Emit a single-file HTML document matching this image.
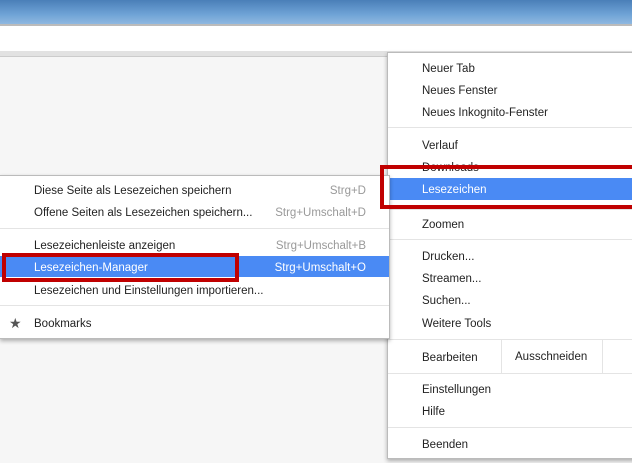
<!DOCTYPE html><html><head><style>
body{margin:0;width:632px;height:463px;overflow:hidden;position:relative;font-family:"Liberation Sans",sans-serif;font-size:11.5px;color:#222;background:#f6f6f6}
.a{position:absolute}
.t{position:absolute;white-space:nowrap;line-height:14px;margin-top:1px}
.sep{position:absolute;height:1px;background:#e4e4e4}
</style></head><body>
<div class="a" style="left:0;top:0;width:632px;height:24px;background:linear-gradient(#4a7fb8,#6fa3d6 60%,#8fb8e0)"></div>
<div class="a" style="left:0;top:24px;width:632px;height:2px;background:#bbb"></div>
<div class="a" style="left:0;top:26px;width:632px;height:26px;background:#fff"></div>
<div class="a" style="left:0;top:51px;width:632px;height:5px;background:#e2e2e2;border-bottom:1px solid #ccc"></div>

<!-- main menu -->
<div class="a" style="left:387px;top:52px;width:250px;height:405px;background:#fff;border:1px solid #bbb;box-shadow:0 2px 4px rgba(0,0,0,.3)"></div>
<div class="t" style="left:422px;top:61px">Neuer Tab</div>
<div class="t" style="left:422px;top:83px">Neues Fenster</div>
<div class="t" style="left:422px;top:105px">Neues Inkognito-Fenster</div>
<div class="sep" style="left:388px;top:127px;width:244px"></div>
<div class="t" style="left:422px;top:138px">Verlauf</div>
<div class="t" style="left:422px;top:160px">Downloads</div>
<div class="a" style="left:390px;top:178px;width:242px;height:22px;background:#4a8af4"></div>
<div class="t" style="left:422px;top:182px;color:#fff">Lesezeichen</div>
<div class="sep" style="left:388px;top:209px;width:244px"></div>
<div class="t" style="left:422px;top:217px">Zoomen</div>
<div class="sep" style="left:388px;top:239px;width:244px"></div>
<div class="t" style="left:422px;top:249px">Drucken...</div>
<div class="t" style="left:422px;top:271px">Streamen...</div>
<div class="t" style="left:422px;top:293px">Suchen...</div>
<div class="t" style="left:422px;top:316px">Weitere Tools</div>
<div class="sep" style="left:388px;top:339px;width:244px"></div>
<div class="t" style="left:422px;top:350px">Bearbeiten</div>
<div class="a" style="left:501px;top:339px;width:1px;height:34px;background:#e4e4e4"></div>
<div class="t" style="left:515px;top:349px">Ausschneiden</div>
<div class="a" style="left:602px;top:339px;width:1px;height:34px;background:#e4e4e4"></div>
<div class="sep" style="left:388px;top:373px;width:244px"></div>
<div class="t" style="left:422px;top:382px">Einstellungen</div>
<div class="t" style="left:422px;top:404px">Hilfe</div>
<div class="sep" style="left:388px;top:427px;width:244px"></div>
<div class="t" style="left:422px;top:437px">Beenden</div>

<!-- submenu -->
<div class="a" style="left:0;top:175px;width:389px;height:162px;background:#fff;border:1px solid #bbb;border-left:none;box-shadow:0 2px 4px rgba(0,0,0,.3)"></div>
<div class="t" style="left:34px;top:183px">Diese Seite als Lesezeichen speichern</div>
<div class="t" style="left:34px;top:205px">Offene Seiten als Lesezeichen speichern...</div>
<div class="t" style="right:266px;top:183px;color:#999">Strg+D</div>
<div class="t" style="right:266px;top:205px;color:#999">Strg+Umschalt+D</div>
<div class="sep" style="left:0;top:228px;width:389px"></div>
<div class="t" style="left:34px;top:238px">Lesezeichenleiste anzeigen</div>
<div class="t" style="right:266px;top:238px;color:#999">Strg+Umschalt+B</div>
<div class="a" style="left:0;top:256px;width:389px;height:21px;background:#4a8af4"></div>
<div class="t" style="left:34px;top:260px;color:#fff">Lesezeichen-Manager</div>
<div class="t" style="right:266px;top:260px;color:#fff">Strg+Umschalt+O</div>
<div class="a" style="left:2px;top:253px;width:237px;height:29px;box-sizing:border-box;border:4px solid #c00000"></div>
<div class="t" style="left:34px;top:283px">Lesezeichen und Einstellungen importieren...</div>
<div class="sep" style="left:0;top:305px;width:389px"></div>
<div class="t" style="left:9px;top:315px;color:#555;font-size:14px">★</div>
<div class="t" style="left:34px;top:316px">Bookmarks</div>
<div class="a" style="left:380px;top:165px;width:252px;height:44px;box-sizing:border-box;border:4px solid #c00000;border-right:none"></div>
</body></html>
